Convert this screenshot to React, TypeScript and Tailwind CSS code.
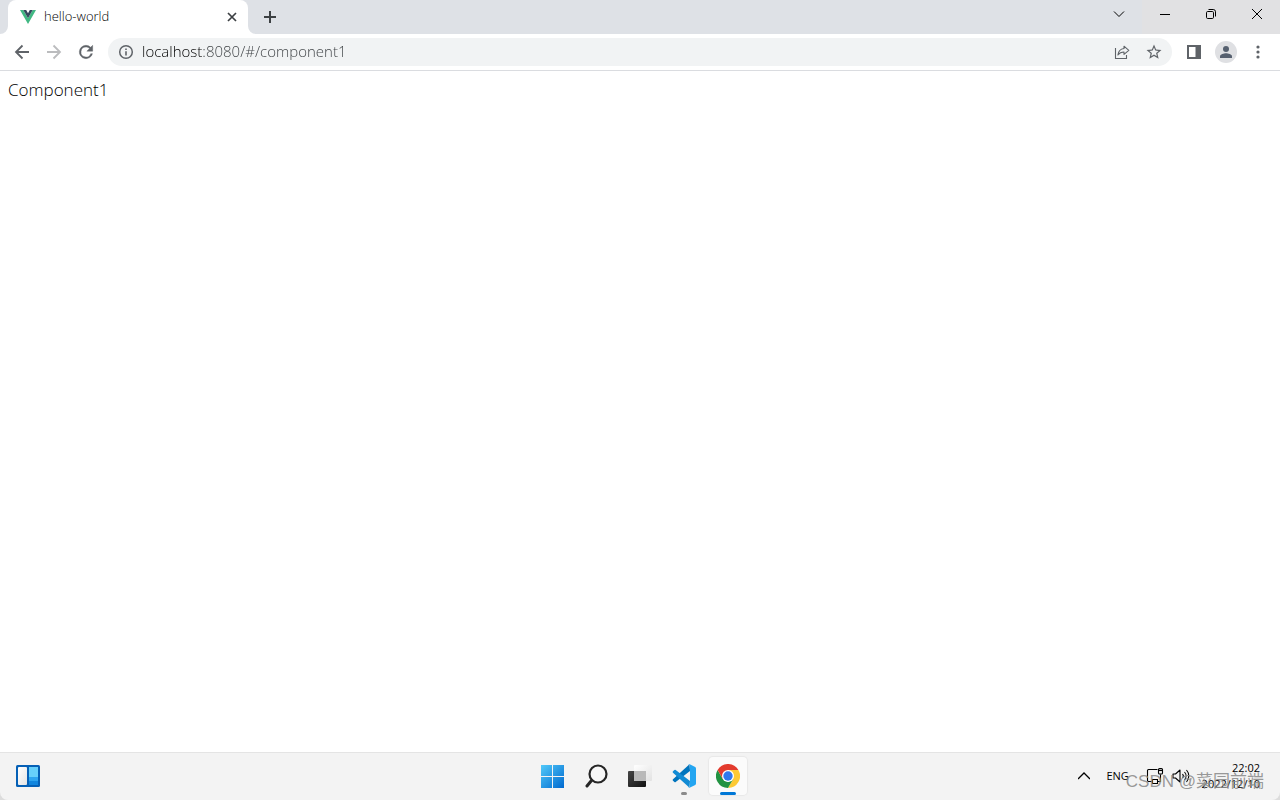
import type { ReactNode } from 'react';

interface IconButtonProps {
  label: string;
  className?: string;
  children: ReactNode;
}

// Toolbar button, 32px hit area around a small icon
function IconButton({ label, className = 'text-[#5f6368]', children }: IconButtonProps) {
  return (
    <button
      type="button"
      aria-label={label}
      className={`flex h-8 w-8 shrink-0 items-center justify-center rounded-full ${className}`}
    >
      {children}
    </button>
  );
}

function WindowButton({ label, children }: { label: string; children: ReactNode }) {
  return (
    <button
      type="button"
      aria-label={label}
      className="flex h-7 w-[46px] items-center justify-center text-black"
    >
      {children}
    </button>
  );
}

function TaskButton({ label, children }: { label: string; children: ReactNode }) {
  return (
    <button type="button" aria-label={label} className="relative flex h-12 w-11 items-center justify-center">
      {children}
    </button>
  );
}

function VueLogo() {
  return (
    <svg width="16" height="16" viewBox="0 0 16 16" aria-hidden="true">
      <path d="M0 1h3.3L8 9.2 12.7 1H16L8 15z" fill="#41b883" />
      <path d="M3.3 1h2.9L8 4.2 9.8 1h2.9L8 9.3z" fill="#35495e" />
    </svg>
  );
}

function TabStrip() {
  return (
    <header className="flex h-[34px] bg-[#dee1e6]">
      <div className="relative ml-2 flex w-60 items-center rounded-t-lg bg-white pr-2 pl-3">
        {/* Curved feet of the active tab */}
        <svg className="absolute bottom-0 -left-2" width="8" height="8" viewBox="0 0 8 8" aria-hidden="true">
          <path d="M8 0v8H0a8 8 0 0 0 8-8z" fill="#fff" />
        </svg>
        <svg className="absolute -right-2 bottom-0" width="8" height="8" viewBox="0 0 8 8" aria-hidden="true">
          <path d="M0 0v8h8a8 8 0 0 1-8-8z" fill="#fff" />
        </svg>
        <VueLogo />
        <span className="ml-2 flex-1 truncate text-[13px] font-light text-black">hello-world</span>
        <button type="button" aria-label="Close tab" className="flex h-4 w-4 items-center justify-center text-[#3c4043]">
          <svg width="10" height="10" viewBox="0 0 10 10" stroke="currentColor" strokeWidth="1.7">
            <path d="M1 1l8 8M9 1L1 9" />
          </svg>
        </button>
      </div>
      <button type="button" aria-label="New tab" className="ml-2 flex h-[34px] w-7 items-center justify-center text-[#3c4043]">
        <svg width="12" height="12" viewBox="0 0 12 12" stroke="currentColor" strokeWidth="2">
          <path d="M6 0v12M0 6h12" />
        </svg>
      </button>
      <div className="ml-auto flex">
        <WindowButton label="Search tabs">
          <svg width="12" height="12" viewBox="0 0 12 12" fill="none" stroke="currentColor">
            <path d="M1 3.5l5 5 5-5" />
          </svg>
        </WindowButton>
        <div className="flex bg-[#e1e1e3]">
          <WindowButton label="Minimize">
            <svg width="10" height="10" viewBox="0 0 10 10" stroke="currentColor">
              <path d="M0 5.5h10" />
            </svg>
          </WindowButton>
          <WindowButton label="Restore">
            <svg width="12" height="12" viewBox="0 0 12 12" fill="none" stroke="currentColor">
              <rect x="1.5" y="3.5" width="7" height="7" rx="1.2" />
              <path d="M3.5 1.5h4.7a2.3 2.3 0 0 1 2.3 2.3v4.7" />
            </svg>
          </WindowButton>
          <WindowButton label="Close">
            <svg width="12" height="12" viewBox="0 0 12 12" stroke="currentColor">
              <path d="M1 1l10 10M11 1L1 11" />
            </svg>
          </WindowButton>
        </div>
      </div>
    </header>
  );
}

function Toolbar() {
  return (
    <div className="flex h-[37px] items-center border-b border-[#dadce0] bg-white px-1.5">
      <IconButton label="Back">
        <svg width="16" height="16" viewBox="0 0 16 16" fill="none" stroke="currentColor" strokeWidth="1.8">
          <path d="M15 8H2.5M8.5 1.5L2 8l6.5 6.5" />
        </svg>
      </IconButton>
      <IconButton label="Forward" className="text-[#bbbcbe]">
        <svg width="16" height="16" viewBox="0 0 16 16" fill="none" stroke="currentColor" strokeWidth="1.8">
          <path d="M1 8h12.5M7.5 1.5L14 8l-6.5 6.5" />
        </svg>
      </IconButton>
      <IconButton label="Reload">
        <svg width="20" height="20" viewBox="0 0 24 24" fill="currentColor">
          <path d="M17.65 6.35A7.96 7.96 0 0 0 12 4a8 8 0 1 0 7.73 10h-2.08A6 6 0 1 1 12 6c1.66 0 3.14.69 4.22 1.78L13 11h7V4z" stroke="currentColor" strokeWidth=".5" />
        </svg>
      </IconButton>

      <div className="mx-1.5 flex h-7 min-w-0 flex-1 items-center rounded-full bg-[#f1f3f4] pr-0.5 pl-2.5">
        <svg className="shrink-0 text-[#5f6368]" width="16" height="16" viewBox="0 0 16 16" aria-hidden="true">
          <circle cx="8" cy="8" r="6.3" fill="none" stroke="currentColor" strokeWidth="1.5" />
          <path d="M7.2 7.2h1.6v4.2H7.2zM7.2 4.5h1.6v1.6H7.2z" fill="currentColor" />
        </svg>
        {/* Host is dark, the rest of the address is muted */}
        <input
          type="text"
          aria-label="Address"
          defaultValue="localhost:8080/#/component1"
          className="ml-2 h-7 min-w-0 flex-1 bg-[linear-gradient(to_right,#000_60px,#3c4043_60px)] bg-clip-text pb-0.5 text-[15px] font-light text-transparent outline-none"
        />
        <IconButton label="Share">
          <svg width="16" height="16" viewBox="0 0 16 16" fill="none" stroke="currentColor" strokeWidth="1.1">
            <path d="M1.5 4v10.5h11V11" />
            <path d="M10 2.2L14.8 6.3 10 10.3V8C7.3 8 5.4 9 3.9 11c.4-3.5 2.3-6 6.1-6.5z" strokeLinejoin="round" />
          </svg>
        </IconButton>
        <IconButton label="Bookmark this tab">
          <svg width="18" height="18" viewBox="0 0 24 24" fill="currentColor">
            <path d="M22 9.24l-7.19-.62L12 2 9.19 8.63 2 9.24l5.46 4.73L5.82 21 12 17.27 18.18 21l-1.63-7.03zM12 15.4l-3.76 2.27 1-4.28-3.32-2.88 4.38-.38L12 6.1l1.71 4.04 4.38.38-3.32 2.88 1 4.28z" />
          </svg>
        </IconButton>
      </div>

      <IconButton label="Side panel">
        <svg width="14" height="14" viewBox="0 0 14 14">
          <path d="M0 0h14v14H0zM2 2v10h6.5V2z" fill="currentColor" fillRule="evenodd" />
        </svg>
      </IconButton>
      <IconButton label="Profile">
        <svg width="22" height="22" viewBox="0 0 22 22">
          <circle cx="11" cy="11" r="11" fill="#dfe0e3" />
          <circle cx="11" cy="8" r="3" fill="#56606f" />
          <path d="M5 17v-1.8c0-2 4-3 6-3s6 1 6 3V17z" fill="#56606f" />
        </svg>
      </IconButton>
      <IconButton label="Menu">
        <svg width="4" height="14" viewBox="0 0 4 14" fill="currentColor">
          <circle cx="2" cy="2" r="1.6" />
          <circle cx="2" cy="7" r="1.6" />
          <circle cx="2" cy="12" r="1.6" />
        </svg>
      </IconButton>
    </div>
  );
}

function Taskbar() {
  return (
    <footer className="bg-[#dcdcdc]">
      <div className="relative grid h-12 grid-cols-[1fr_auto_1fr] items-center rounded-b-lg bg-[#f3f3f3] shadow-[inset_0_1px_#e4e4e4]">
        <div className="flex pl-1.5">
          <TaskButton label="Widgets">
            <svg width="24" height="24" viewBox="0 0 24 24">
              <defs>
                <linearGradient id="panel" x1="0" y1="0" x2="1" y2="1">
                  <stop offset="0" stopColor="#fff" />
                  <stop offset="1" stopColor="#e4e4e4" />
                </linearGradient>
              </defs>
              <rect y="1" width="24" height="22" rx="1.5" fill="#0560b6" />
              <rect x="2" y="3" width="9" height="18" rx="1" fill="url(#panel)" />
              <path d="M13 3h9v10h-9z" fill="#67d0fb" />
              <path d="M13 13h9v4h-9z" fill="#2ea5f0" />
              <path d="M13 17h9v4h-9z" fill="#1186df" />
            </svg>
          </TaskButton>
        </div>

        <nav aria-label="Apps" className="flex">
          <TaskButton label="Start">
            <svg width="24" height="24" viewBox="0 0 24 24">
              <defs>
                <linearGradient id="win" gradientUnits="userSpaceOnUse" x1="0" y1="0" x2="24" y2="24">
                  <stop offset="0" stopColor="#54cdfb" />
                  <stop offset="1" stopColor="#0069cf" />
                </linearGradient>
              </defs>
              <path d="M1 1h11v11H1zM13 1h11v11H13zM1 13h11v11H1zM13 13h11v11H13z" fill="url(#win)" />
            </svg>
          </TaskButton>
          <TaskButton label="Search">
            <svg width="24" height="24" viewBox="0 0 24 24" fill="none" stroke="#262626">
              <circle cx="14" cy="10" r="8.5" fill="#f8f8f8" strokeWidth="2.2" />
              <path d="M7.5 16.5L3 22" strokeWidth="3" strokeLinecap="round" />
            </svg>
          </TaskButton>
          <TaskButton label="Task view">
            <svg width="24" height="24" viewBox="0 0 24 24">
              <defs>
                <linearGradient id="dark" x1="0" y1="0" x2="1" y2="1">
                  <stop offset="0" stopColor="#454545" />
                  <stop offset="1" stopColor="#111" />
                </linearGradient>
                <linearGradient id="light" x1="0" y1="0" x2="1" y2="1">
                  <stop offset="0" stopColor="#fff" />
                  <stop offset="1" stopColor="#e2e2e2" />
                </linearGradient>
              </defs>
              <rect y="7" width="18" height="16" rx="1" fill="url(#dark)" />
              <rect x="6" y="1" width="18" height="16" rx="1" fill="url(#light)" />
              <path d="M6 7h12v10H7a1 1 0 0 1-1-1z" fill="#b9b9b9" />
            </svg>
          </TaskButton>
          <TaskButton label="Visual Studio Code">
            <svg width="24" height="24" viewBox="0 0 24 24">
              <path d="M17.5.3L1 15.3a1 1 0 0 0 0 1.5l1.4 1.2a1 1 0 0 0 1.3.1L18 7z" fill="#0074bd" />
              <path d="M17.5 23.7L1 8.7a1 1 0 0 1 0-1.5L2.4 6a1 1 0 0 1 1.3-.1L18 17z" fill="#128bd4" />
              <path d="M17.5 23.8c-.6.1-1.2-.1-1.6-.5.7.6 2.1.2 2.1-.8v-21c0-1-1.4-1.4-2.1-.8.4-.5 1.2-.6 1.8-.4l5 2.4c.8.4 1.3 1.1 1.3 2v14.6c0 .9-.5 1.6-1.3 2z" fill="#23a5f1" />
            </svg>
            <span className="absolute bottom-[5px] h-[3px] w-1.5 rounded-full bg-[#8a8a8a]" />
          </TaskButton>
          <TaskButton label="Google Chrome">
            <span className="flex h-[38px] w-[38px] items-center justify-center rounded bg-[#fbfbfb] shadow-[0_0_1px_1px_#e8e8e8]">
              <svg width="24" height="24" viewBox="0 0 24 24">
                <path d="M22.4 6A12 12 0 0 1 12 24l5.2-9L12 6z" fill="#fcc934" />
                <path d="M1.6 6l5.2 9 5.2 3 5.2-3L12 24A12 12 0 0 1 1.6 6z" fill="#229342" />
                <path d="M1.6 6l5.2 9L12 12V6h10.4A12 12 0 0 0 1.6 6z" fill="#e33b2e" />
                <circle cx="12" cy="12" r="6" fill="#fff" />
                <circle cx="12" cy="12" r="4.7" fill="#2f78ee" />
              </svg>
            </span>
            <span className="absolute bottom-[5px] h-[3px] w-4 rounded-full bg-[#0078d7]" />
          </TaskButton>
        </nav>

        <div className="flex items-center justify-end pr-5 text-[11px] text-black">
          <button type="button" aria-label="Show hidden icons" className="mr-4">
            <svg width="12" height="12" viewBox="0 0 12 12" fill="none" stroke="currentColor" strokeWidth="1.3">
              <path d="M0 9l6-6 6 6" />
            </svg>
          </button>
          <button type="button" className="w-6">ENG</button>
          <button type="button" aria-label="Network and volume" className="ml-4 flex gap-2">
            <svg width="18" height="16" viewBox="0 0 18 16" fill="none" stroke="currentColor" strokeWidth="1.1">
              <path d="M11.5 1.5h-9a1 1 0 0 0-1 1v10a1 1 0 0 0 1 1h4M14.5 6.5v7h-3M6.5 11.5h5v4h-5z" />
              <rect x="12.5" y=".6" width="4" height="5.4" rx="1" />
              <path d="M12.5 2.5h4" />
            </svg>
            <svg width="18" height="16" viewBox="0 0 18 16" fill="none" stroke="currentColor" strokeWidth="1.1">
              <path d="M1 6h2.5L8 2v12L3.5 10H1z" strokeLinejoin="round" />
              <path d="M10.5 6a3 3 0 0 1 0 4M12.5 4a6 6 0 0 1 0 8M14.5 2a9 9 0 0 1 0 12" />
            </svg>
          </button>
          <button type="button" className="ml-3 text-right leading-4">
            22:02
            <br />
            2022/12/10
          </button>
        </div>
        <span className="pointer-events-none absolute right-4 bottom-1.5 font-['Liberation_Sans','Noto_Sans_CJK_SC',sans-serif] text-[17px] leading-6 text-[#8c8c8c]/90">
          CSDN @菜园前端
        </span>
      </div>
    </footer>
  );
}

export default function App() {
  return (
    <div className="flex min-h-screen flex-col bg-white font-['Open_Sans','Noto_Sans_CJK_SC',sans-serif]">
      <TabStrip />
      <Toolbar />
      <main className="flex-1 p-2 text-[17px] leading-[22px] font-light text-black">Component1</main>
      <Taskbar />
    </div>
  );
}
